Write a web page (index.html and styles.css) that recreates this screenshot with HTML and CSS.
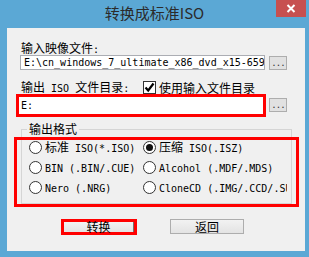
FILE: index.html
```html
<!DOCTYPE html>
<html>
  <head>
    <title>转换成标准ISO</title>
    <link rel="stylesheet" href="styles.css">
  </head>
  <body>
    <div class="window">
      <div class="titlebar">
        <span class="title">转换成标准ISO</span>
        <span class="close">
          <svg width="10" height="9" viewBox="0 0 10 9">
            <path d="M1.5 1 L8.5 8 M8.5 1 L1.5 8" stroke="#fff" stroke-width="2" fill="none"/>
          </svg>
        </span>
      </div>
      <div class="client">
        <div class="lbl">输入映像文件<span class="en">:</span></div>
        <div class="row1">
          <div class="input wide"><span class="en">E:\cn_windows_7_ultimate_x86_dvd_x15-65921.iso</span></div>
          <div class="dots">...</div>
        </div>
        <div class="row2">
          <div class="lbl2">输出<span class="en"> ISO </span>文件目录<span class="en">:</span></div>
          <span class="check">
            <svg width="11" height="11" viewBox="0 0 11 11">
              <path d="M1.5 5.5 L4.2 8.5 L9.5 1.5" stroke="#000" stroke-width="2.2" fill="none"/>
            </svg>
          </span>
          <span class="check-text">使用输入文件目录</span>
        </div>
        <div class="row3">
          <div class="mark out-mark">
            <div class="input"><span class="en">E:</span></div>
          </div>
          <div class="dots">...</div>
        </div>
        <div class="group">
          <div class="legend">输出格式</div>
          <div class="mark radio-mark">
            <div class="radios">
              <div class="radio"><span class="dot"></span><span class="rtext">标准<span class="en"> ISO(*.ISO)</span></span></div>
              <div class="radio"><span class="dot on"></span><span class="rtext">压缩<span class="en"> ISO(.ISZ)</span></span></div>
              <div class="radio"><span class="dot"></span><span class="rtext"><span class="en">BIN (.BIN/.CUE)</span></span></div>
              <div class="radio"><span class="dot"></span><span class="rtext"><span class="en">Alcohol (.MDF/.MDS)</span></span></div>
              <div class="radio"><span class="dot"></span><span class="rtext"><span class="en">Nero (.NRG)</span></span></div>
              <div class="radio"><span class="dot"></span><span class="rtext"><span class="en">CloneCD (.IMG/.CCD/.SUB)</span></span></div>
            </div>
          </div>
        </div>
        <div class="buttons">
          <div class="mark btn-mark"><div class="btn">转换</div></div>
          <div class="btn back">返回</div>
        </div>
      </div>
    </div>
  </body>
</html>
```

FILE: styles.css
```css
* {
  box-sizing: border-box;
}
body {
  margin: 0;
  background: #5ba8d5;
  font-family: "Noto Sans CJK SC", sans-serif;
  font-size: 12px;
  color: #000;
}
.window {
  width: 309px;
  height: 257px;
  background: #5ba8d5;
}
.titlebar {
  height: 28px;
  position: relative;
  text-align: center;
}
.title {
  font-size: 15px;
  line-height: 25px;
  color: #2b2b2b;
}
.close {
  position: absolute;
  top: 0;
  left: 276px;
  width: 30px;
  height: 17px;
  background: #c75050;
  display: flex;
  align-items: center;
  justify-content: center;
}
.close svg {
  display: block;
}
.client {
  margin-left: 7px;
  width: 298px;
  height: 223px;
  background: #f0f0f0;
  padding: 13px 0 0 13px;
}
.en {
  font-family: "DejaVu Sans Mono", monospace;
  font-size: 10px;
}
.lbl {
  height: 14px;
  line-height: 14px;
  padding-left: 1px;
}
.row1 {
  display: flex;
  height: 15px;
}
.input {
  background: #fff;
  border: 1px solid #abadb3;
  padding-left: 3px;
  white-space: nowrap;
  overflow-x: clip;
  display: flex;
  align-items: center;
}
.input.wide {
  width: 245px;
  height: 15px;
}
.dots {
  width: 18px;
  height: 14px;
  margin-left: 4px;
  margin-top: 1px;
  background: #e1e1e1;
  border: 1px solid #adadad;
  font-family: "DejaVu Sans Mono", monospace;
  font-size: 9px;
  line-height: 13px;
  text-align: center;
  color: #333;
  letter-spacing: -1px;
}
.row2 {
  display: flex;
  align-items: center;
  height: 13px;
  margin-top: 11px;
}
.lbl2 {
  width: 123px;
  padding-left: 1px;
  line-height: 13px;
  white-space: nowrap;
}
.check {
  width: 13px;
  height: 13px;
  background: #fff;
  border: 1px solid #333;
  display: flex;
  align-items: center;
  justify-content: center;
}
.check-text {
  margin-left: 3px;
  line-height: 13px;
}
.row3 {
  display: flex;
  margin-left: -4px;
}
.mark {
  border: 3px solid #ff0000;
}
.out-mark {
  width: 250px;
  height: 23px;
}
.out-mark .input {
  width: 244px;
  height: 17px;
  border: none;
  padding-left: 2px;
}
.row3 .dots {
  margin-left: 3px;
  margin-top: 4px;
}
.group {
  width: 271px;
  height: 75px;
  margin-top: 12px;
  margin-left: 1px;
  border: 1px solid #d5d5d5;
}
.legend {
  width: max-content;
  margin-top: -8px;
  margin-left: 5px;
  padding: 0 2px;
  height: 14px;
  line-height: 14px;
  background: #f0f0f0;
}
.radio-mark {
  width: 285px;
  height: 70px;
  margin-left: -8px;
  margin-top: 1px;
}
.radios {
  display: grid;
  grid-template-columns: 114px 144px;
  row-gap: 5px;
  padding-left: 12px;
}
.radio {
  display: flex;
  align-items: center;
  height: 15px;
  overflow-x: clip;
  white-space: nowrap;
}
.dot {
  flex: none;
  width: 13px;
  height: 13px;
  border-radius: 50%;
  border: 1px solid #333;
  background: #fff;
  display: flex;
  align-items: center;
  justify-content: center;
}
.dot.on::after {
  content: "";
  width: 7px;
  height: 7px;
  border-radius: 50%;
  background: #111;
}
.rtext {
  margin-left: 3px;
  line-height: 15px;
}
.buttons {
  display: flex;
  margin-top: 15px;
  margin-left: 41px;
}
.btn-mark {
  width: 76px;
  height: 16px;
}
.btn {
  height: 100%;
  background: linear-gradient(#f2f2f2, #e3e3e3);
  border-right: 1px solid #707070;
  display: flex;
  align-items: center;
  justify-content: center;
  font-size: 12px;
  line-height: 1;
}
.btn.back {
  width: 74px;
  height: 15px;
  margin-left: 33px;
  border: 1px solid #adadad;
}
```
